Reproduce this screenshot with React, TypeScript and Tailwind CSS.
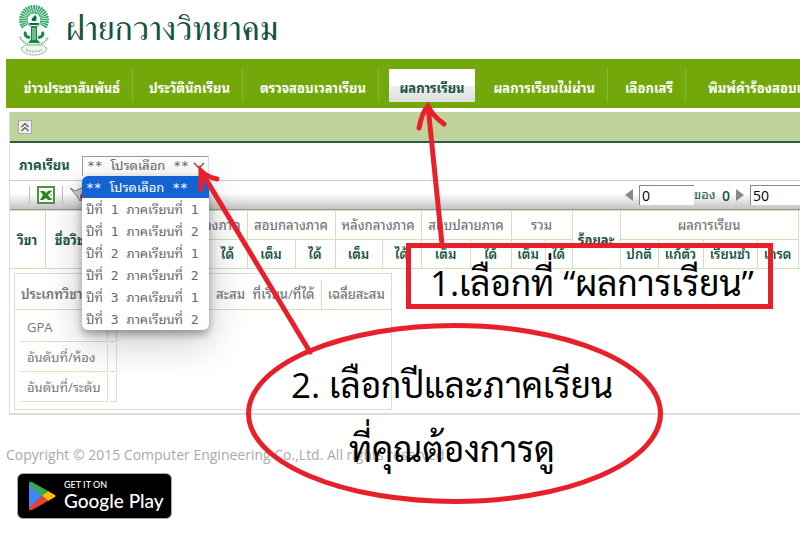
import React from "react";

const sans = "font-['Open_Sans','Noto_Sans_Thai_Looped','Noto_Sans',sans-serif]";
const mono = "font-['DejaVu_Sans_Mono','Noto_Sans_Thai_Looped',monospace]";

const navItems = [
  { label: "ข่าวประชาสัมพันธ์", box: "w-[127px] pr-3 border-r" },
  { label: "ประวัตินักเรียน", box: "w-[110px] pr-3 border-r" },
  { label: "ตรวจสอบเวลาเรียน", box: "w-[136px] pr-3 border-r" },
  { label: "ผลการเรียน", box: "w-[107px]", active: true },
  { label: "ผลการเรียนไม่ผ่าน", box: "w-[122px] pr-3 border-r" },
  { label: "เลือกเสรี", box: "w-[78px] pr-3 border-r" },
  { label: "พิมพ์คำร้องสอบแก้ตัว", box: "pl-[22px]" },
];

const options = [
  "** โปรดเลือก **",
  "ปีที่ 1 ภาคเรียนที่ 1",
  "ปีที่ 1 ภาคเรียนที่ 2",
  "ปีที่ 2 ภาคเรียนที่ 1",
  "ปีที่ 2 ภาคเรียนที่ 2",
  "ปีที่ 3 ภาคเรียนที่ 1",
  "ปีที่ 3 ภาคเรียนที่ 2",
];

const rays = Array.from({ length: 23 }, (_, i) => -121 + i * 11);

function SchoolLogo() {
  return (
    <svg className="h-[52px] w-8 shrink-0" viewBox="0 0 32 52" role="img" aria-label="ตราโรงเรียน">
      {rays.map((a) => (
        <path key={a} d="M15.6 9 L15 1.500 Q16 0 17 1.500 L16.400 9Z" fill="#35a869" transform={`rotate(${a} 16 16)`} />
      ))}
      <circle cx="16" cy="16" r="7" fill="none" stroke="#35a869" />
      <path d="M17 11c2 2 2 3 1 6h-4c-1-3 1-3 3-6z" fill="#08713b" />
      <path d="M11 19h10l-1 2h-8z" fill="#08713b" />
      <path d="M13 22h6v13l3 4H10l3-4z" fill="#128a48" />
      <path d="M12 33c-4 1-6-3-4-5M20 33c4 1 6-3 4-5" fill="none" stroke="#128a48" strokeWidth="3" />
      <path d="M15 24v12M17 24v12" stroke="#d5ecd9" strokeWidth="1" />
      <path d="M2 33c3 6 7 8 14 8s11-2 14-8" fill="none" stroke="#6aa57d" strokeWidth="2" strokeDasharray="1 1" />
      <path d="M3 44c3-1 4-3 5-3h16c1 0 2 2 5 3-1 5-7 7-13 7S4 49 3 44z" fill="#f2f7f1" stroke="#9bbca3" />
      <path d="M8 46q8 3 16 0" fill="none" stroke="#a9c6af" strokeWidth="2" strokeDasharray="2 1" />
    </svg>
  );
}

function Header() {
  return (
    <header className="flex h-[59px] items-center gap-4 pl-[18px]">
      <SchoolLogo />
      <h1 className="whitespace-nowrap font-['FreeSerif','Sarabun',serif] text-[34px] leading-[52px] text-[#14543f]">ฝายกวางวิทยาคม</h1>
    </header>
  );
}

function Nav() {
  return (
    <nav className="ml-1.5 flex h-[49px] items-center overflow-hidden bg-[#72a80a] pt-1.5 pb-0.5 text-[13px] leading-5 font-bold text-white">
      {navItems.map((item) => (
        <div key={item.label} className={`flex h-[33px] shrink-0 items-center justify-end border-[#89b938] ${item.box}`}>
          <a
            href="#"
            className={
              item.active
                ? "ml-2.5 mr-auto flex h-[33px] w-[86px] items-center justify-center bg-linear-to-b from-white from-50% via-[#efefef] via-50% to-[#dedede] pt-1 text-[#195443]"
                : "pt-1 whitespace-nowrap"
            }
          >
            {item.label}
          </a>
        </div>
      ))}
    </nav>
  );
}

function Filter() {
  return (
    <div className="flex h-[37px] items-center pt-2 pl-[9px] text-[13px]">
      <label htmlFor="term" className="w-[63px] font-bold text-[#195443]">
        ภาคเรียน
      </label>
      <div className="relative h-5 w-[127px]">
        <select
          id="term"
          className={`h-5 w-full appearance-none border border-b-0 border-[#999] border-r-[#ddd] bg-white pl-1 text-[13px] leading-4 text-[#666] ${mono}`}
        >
          {options.map((o) => (
            <option key={o}>{o}</option>
          ))}
        </select>
        <svg className="pointer-events-none absolute top-1.5 right-1 h-2 w-3" viewBox="0 0 12 8" fill="none" stroke="#555" strokeWidth="1.3">
          <path d="M1 1l5 5 5-5" />
        </svg>
        <ul
          role="listbox"
          aria-label="ภาคเรียน"
          className={`absolute top-5 left-0 z-10 h-[154px] w-[127px] overflow-hidden rounded-md bg-white text-[13px] text-[#666] shadow-[0_4px_8px_rgba(0,0,0,0.35),0_12px_40px_rgba(0,0,0,0.22)] ${mono}`}
        >
          {options.map((o, i) => (
            <li
              key={o}
              role="option"
              aria-selected={i === 0}
              className="h-[22px] whitespace-nowrap pl-1 leading-6 aria-selected:bg-[#1463d2] aria-selected:text-white"
            >
              {o}
            </li>
          ))}
        </ul>
      </div>
    </div>
  );
}

function Toolbar() {
  return (
    <div className="flex h-[30px] items-center justify-between border-t border-b border-t-[#ccc] border-b-[#999] bg-linear-to-b from-white from-45% to-[#c4c4c4]">
      <div className="flex items-center gap-[7px] pl-[19px]">
        <span className="h-[18px] w-px bg-[#bbb]" />
        <button type="button" aria-label="Excel">
          <svg className="size-[18px]" viewBox="0 0 18 18">
            <rect x="1" y="1" width="16" height="16" fill="#fff" stroke="#4b963c" strokeWidth="2" />
            <path d="M12 4h3v2h-3zM13 8h2v2h-2zM12 12h3v2h-3z" fill="#b5d9a8" />
            <path d="M3 5h4l2 2 2-2h4l-4 4 4 5h-4l-2-2-3 2H3l3-5z" fill="#2c8424" />
          </svg>
        </button>
        <span className="h-[18px] w-px bg-[#bbb]" />
        <button type="button" aria-label="ล้างตัวกรอง">
          <svg className="size-[18px]" viewBox="0 0 18 18">
            <path d="M0 2l5 3 9-4v12l-4 2-3-5z" fill="#d5d5d5" stroke="#777" />
            <circle cx="15" cy="11" r="5" fill="#d33" />
            <path d="M13 9l4 4m0-4l-4 4" stroke="#fff" strokeWidth="1.5" />
          </svg>
        </button>
      </div>
      <div className="flex items-center text-[14px] text-[#195443]">
        <button type="button" aria-label="หน้าก่อน" className="mr-1.5">
          <svg className="h-3 w-2" viewBox="0 0 8 12" fill="#888"><path d="M8 0v12L0 6z" /></svg>
        </button>
        <input aria-label="หน้า" defaultValue="0" className="h-5 w-[55px] border-t border-l border-[#888] bg-white px-0.5 text-[14px] text-black" />
        <span className="w-7 text-[13px]">ของ</span>
        <span className="w-3.5 font-semibold">0</span>
        <button type="button" aria-label="หน้าถัดไป" className="mr-1.5">
          <svg className="h-3 w-2" viewBox="0 0 8 12" fill="#888"><path d="M0 0v12l8-6z" /></svg>
        </button>
        <input aria-label="แถวต่อหน้า" defaultValue="50" className="h-5 w-[50px] border-t border-l border-[#888] bg-white px-0.5 text-[14px] text-black" />
      </div>
    </div>
  );
}

const colWidths = [
  "w-[35px]", "w-[55px]", "w-[60px]", "w-[48px]", "w-[39px]", "w-[48px]", "w-[40px]", "w-[47px]", "w-[39px]",
  "w-[49px]", "w-[41px]", "w-[34px]", "w-[27px]", "w-[48px]", "w-[38px]", "w-[45px]", "w-[54px]", "w-[41px]",
];
const cell = "h-[29px] overflow-hidden border border-[#d5debd] p-0 text-center leading-5 whitespace-nowrap";
const subHeads = ["เต็ม", "ได้", "เต็ม", "ได้", "เต็ม", "ได้", "เต็ม", "ได้", "เต็ม", "ได้", "ปกติ", "แก้ตัว", "เรียนซ้ำ", "เกรด"];

function ScoreTable() {
  return (
    <table className="w-full table-fixed border-collapse text-[13px] text-[#195443]">
      <colgroup>
        {colWidths.map((w, i) => (
          <col key={i} className={w} />
        ))}
        <col />
      </colgroup>
      <thead>
        <tr>
          <th rowSpan={2} className={`${cell} border-l-0`}>วิขา</th>
          <th rowSpan={2} className={cell}>ชื่อวิชา</th>
          <th rowSpan={2} className={cell}>ประเภท</th>
          {["ก่อนกลางภาค", "สอบกลางภาค", "หลังกลางภาค", "สอบปลายภาค", "รวม"].map((t) => (
            <th key={t} colSpan={2} className={`${cell} font-medium text-[#777]`}>{t}</th>
          ))}
          <th rowSpan={2} className={cell}>ร้อยละ</th>
          <th colSpan={4} className={`${cell} font-medium text-[#777]`}>ผลการเรียน</th>
          <th rowSpan={2} className={`${cell} border-r-0`} />
        </tr>
        <tr>
          {subHeads.map((t, i) => (
            <th key={i} className={`${cell} font-semibold`}>{t}</th>
          ))}
        </tr>
      </thead>
    </table>
  );
}

function Summary() {
  return (
    <div className="mt-1 ml-1 h-[137px] w-[378px] border border-[#d9dfcb] text-[13px] text-[#777]">
      <table className="mt-1.5 w-full table-fixed border-collapse">
        <colgroup>
          <col className="w-[100px]" />
          <col className="w-[90px]" />
          <col className="w-[40px]" />
          <col className="w-[76px]" />
          <col />
        </colgroup>
        <thead>
          <tr className="h-[29px] border-b border-[#d5debd] whitespace-nowrap">
            <th className="p-0 pl-1.5 text-left font-semibold">ประเภทวิชา</th>
            <th className="p-0">หน่วยกิต</th>
            <th className="p-0 text-right font-medium">สะสม</th>
            <th className="border-r border-[#d5debd] p-0 pr-1.5 text-right font-medium">ที่เรียน/ที่ได้</th>
            <th className="p-0 font-medium">เฉลี่ยสะสม</th>
          </tr>
        </thead>
      </table>
      <table className="mt-0.5 ml-[3px] border-separate border-spacing-x-0.5 border-spacing-y-0.5 text-[13px]">
        <tbody>
          {["GPA", "อันดับที่/ห้อง", "อันดับที่/ระดับ"].map((t) => (
            <tr key={t} className="h-7">
              <th scope="row" className="w-[88px] border-r border-b border-[#dbe4c5] p-0 pt-0.5 pl-[7px] text-left font-normal whitespace-nowrap">{t}</th>
              <td className="w-[7px] border-r border-b border-[#dbe4c5] p-0" />
            </tr>
          ))}
        </tbody>
      </table>
    </div>
  );
}

function PlayBadge() {
  return (
    <a href="#" className="ml-[17px] mt-2 flex h-[46px] w-[155px] items-center gap-2 rounded-md border border-[#aaa] bg-black pl-2.5 text-white">
      <svg className="h-[30px] w-7" viewBox="0 0 28 30">
        <path d="M1 2v26l13-13z" fill="#4285f4" />
        <path d="M1 2Q2 0 4 1l16 9-6 6L1 3z" fill="#34a853" />
        <path d="M20 10l7 4q1 1 0 2l-7 4-6-5z" fill="#fbbc04" />
        <path d="M1 28Q2 30 4 29l16-9-6-5L1 27z" fill="#ea4335" />
      </svg>
      <span className="flex flex-col font-['Lato',sans-serif]">
        <span className="text-[9px] leading-[10px] font-medium">GET IT ON</span>
        <span className="text-[19px] leading-[22px] font-medium whitespace-nowrap">Google Play</span>
      </span>
    </a>
  );
}

function Annotations() {
  return (
    <div className="pointer-events-none absolute inset-0 z-20 font-['Open_Sans','Sarabun','Noto_Sans_Thai_Looped',sans-serif] text-[35px] leading-[50px] whitespace-nowrap text-black">
      <svg className="absolute top-0 left-0 h-[533px] w-[800px]" viewBox="0 0 800 533" fill="none" stroke="#e8202a" strokeWidth="5" strokeLinecap="round">
        <rect x="408.500" y="245.500" width="362" height="61" strokeLinecap="butt" />
        <ellipse cx="454.500" cy="413.500" rx="206" ry="88" />
        <path d="M442 244L428 106M419 128q3-16 9-22q5 10 16 18" />
        <path d="M310 352L201 171M201 189v-18q6 6 16 8" />
      </svg>
      <p className="absolute top-[258px] left-[430px]">1.เลือกที่ “ผลการเรียน”</p>
      <p className="absolute top-[360px] left-[291px]">2. เลือกปีและภาคเรียน</p>
      <p className="absolute top-[424px] left-[349px]">ที่คุณต้องการดู</p>
    </div>
  );
}

export default function App() {
  return (
    <div className={`relative min-h-screen overflow-hidden bg-white ${sans}`}>
      <Header />
      <Nav />
      <main className="mt-1 ml-[9px] border-b-2 border-l border-[#ddd] pb-[3px]">
        <div className="flex h-[31px] items-center border-b-2 border-[#2b5b42] bg-[#c0d39c] pl-2">
          <button type="button" aria-label="ย่อ" className="flex size-3.5 items-center justify-center border border-[#aaa] bg-[#eee]">
            <svg className="size-2.5" viewBox="0 0 10 10" fill="none" stroke="#555" strokeWidth="1.2">
              <path d="M1.500 5L5 1.500 8.500 5M1.500 9L5 5.500 8.500 9" />
            </svg>
          </button>
        </div>
        <Filter />
        <Toolbar />
        <ScoreTable />
        <Summary />
      </main>
      <footer className="mt-[30px]">
        <p className="pl-1.5 text-[14px] leading-5 whitespace-nowrap text-[#aaa]">
          Copyright © 2015 Computer Engineering Co.,Ltd. All rights reserved
        </p>
        <PlayBadge />
      </footer>
      <Annotations />
    </div>
  );
}
